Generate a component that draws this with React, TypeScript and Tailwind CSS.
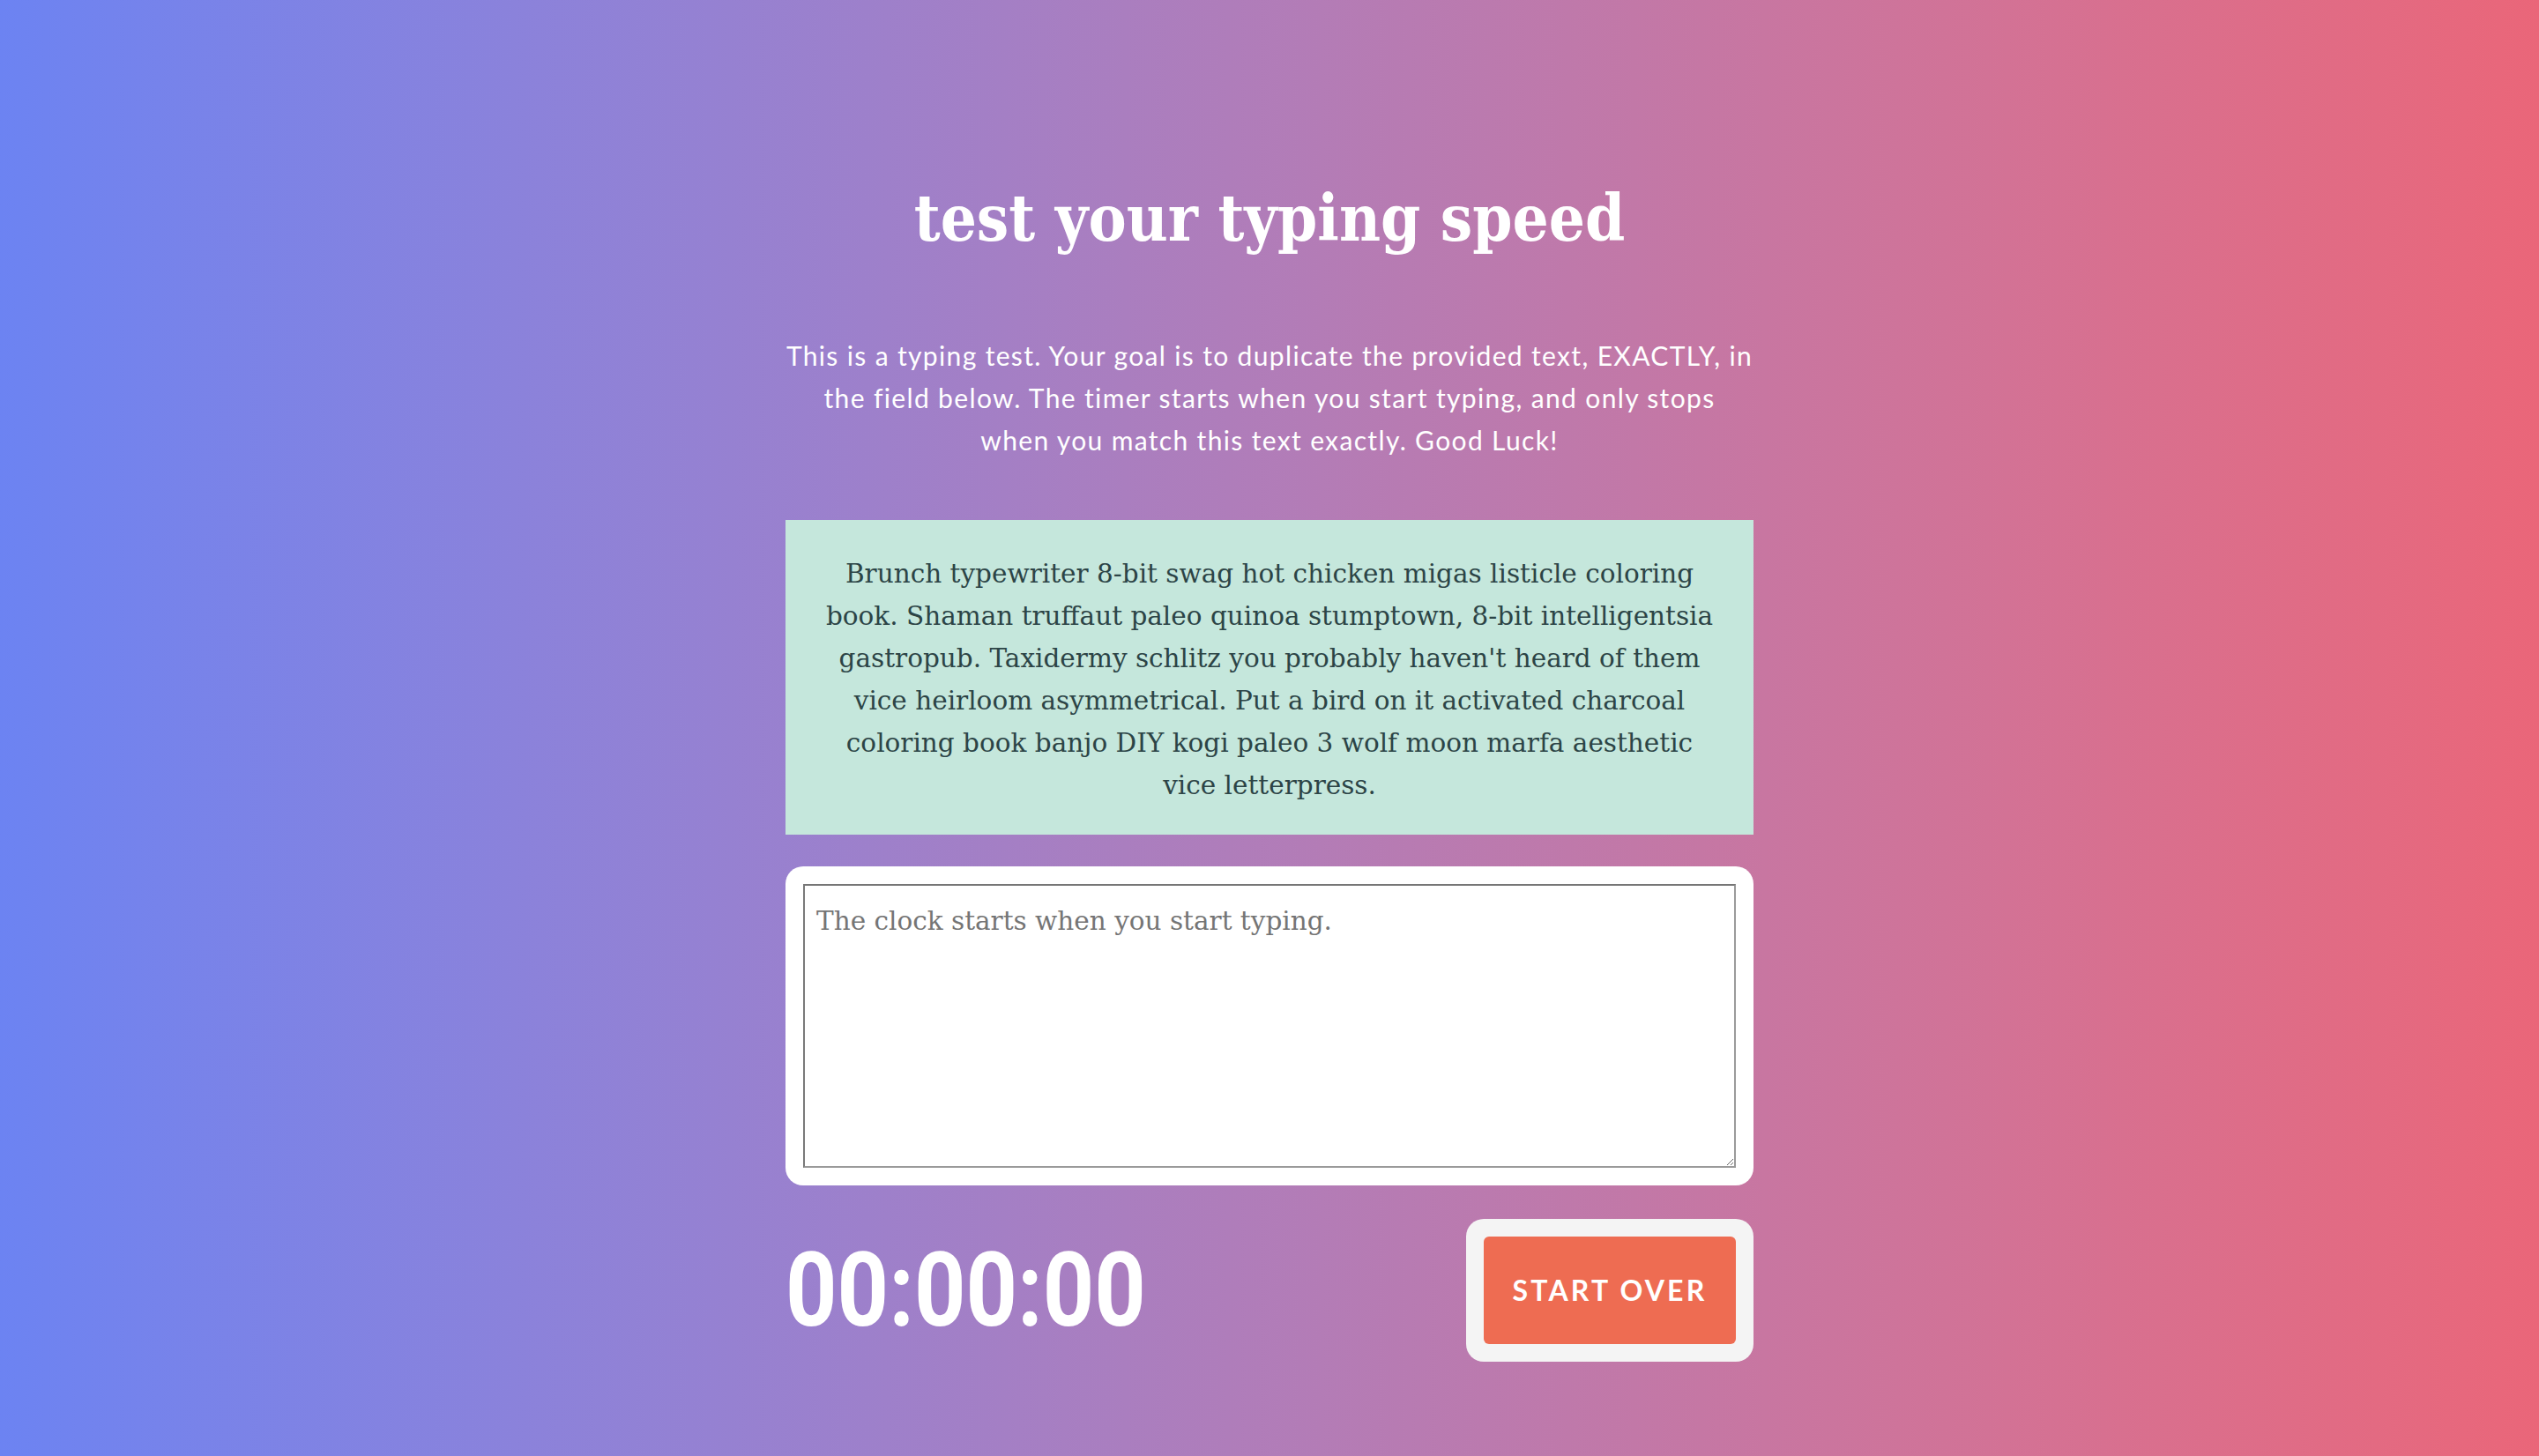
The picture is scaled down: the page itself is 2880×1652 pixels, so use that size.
import React from "react";

export default function App() {
  return (
    <div className="min-h-screen w-full bg-gradient-to-r from-[#6c83f2] to-[#ea6679]">
      <div className="mx-auto flex w-[1098px] flex-col pt-[203px] pb-[100px]">
        <h1 className="text-center font-['DejaVu_Serif_Condensed','DejaVu_Serif',serif] text-[72px] font-bold leading-[90px] text-white font-stretch-condensed">
          test your typing speed
        </h1>
        <p className="mt-[86px] text-center font-['Lato','Noto_Sans',sans-serif] text-[30px] leading-[48px] tracking-[0.045em] text-white">
          This is a typing test. Your goal is to duplicate the provided text, EXACTLY, in
          <br />
          the field below. The timer starts when you start typing, and only stops
          <br />
          when you match this text exactly. Good Luck!
        </p>
        <div className="mt-[67px] bg-[#c5e7dc] px-[30px] pt-[37px] pb-[32px] text-center font-['DejaVu_Serif',serif] text-[29.5px] leading-[48px] text-[#2c4446]">
          Brunch typewriter 8-bit swag hot chicken migas listicle coloring
          <br />
          book. Shaman truffaut paleo quinoa stumptown, 8-bit intelligentsia
          <br />
          gastropub. Taxidermy schlitz you probably haven't heard of them
          <br />
          vice heirloom asymmetrical. Put a bird on it activated charcoal
          <br />
          coloring book banjo DIY kogi paleo 3 wolf moon marfa aesthetic
          <br />
          vice letterpress.
        </div>
        <div className="mt-[36px] rounded-[20px] bg-white p-[20px]">
          <textarea
            className="block h-[322px] w-full border-2 border-t-[#767676] border-l-[#7a7a7a] border-r-[#9a9a9a] border-b-[#9a9a9a] bg-white px-[13px] py-[16px] font-['DejaVu_Serif',serif] text-[29.5px] leading-[48px] text-[#333] outline-none placeholder:text-[#757575]"
            placeholder="The clock starts when you start typing."
          />
        </div>
        <div className="mt-[38px] flex items-center justify-between">
          <div className="origin-left scale-x-[0.88] font-['Roboto',sans-serif] text-[116px] font-bold leading-none text-white">
            00:00:00
          </div>
          <div className="rounded-[20px] bg-[#f4f4f4] p-[20px]">
            <button className="flex h-[122px] w-[286px] items-center justify-center rounded-[6px] bg-[#ee6c52] font-['Lato',sans-serif] text-[32px] font-bold tracking-[0.1em] text-white">
              START OVER
            </button>
          </div>
        </div>
      </div>
    </div>
  );
}
